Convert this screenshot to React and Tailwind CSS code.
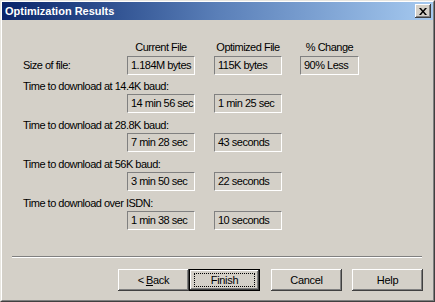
const font = { fontFamily: '"Liberation Sans", Arial, sans-serif' };

const Box = ({ children, className = '' }) => (
  <div
    className={`h-[19px] flex items-center pl-[3px] text-[11px] text-black whitespace-nowrap overflow-hidden border-t border-l border-t-[#808080] border-l-[#808080] border-b border-r border-b-white border-r-white ${className}`}
  >
    {children}
  </div>
);

const Btn = ({ children, isDefault }) => (
  <button
    className={`w-[71px] h-[22px] bg-[#d4d0c8] text-[11px] text-black flex items-center justify-center ${
      isDefault
        ? 'border border-black shadow-[inset_-1px_-1px_#404040,inset_1px_1px_#ffffff,inset_-2px_-2px_#808080]'
        : 'shadow-[inset_-1px_-1px_#404040,inset_1px_1px_#ffffff,inset_-2px_-2px_#808080]'
    }`}
  >
    {isDefault ? (
      <span className="w-[61px] h-[14px] border border-dotted border-black flex items-center justify-center">
        {children}
      </span>
    ) : (
      children
    )}
  </button>
);

const rows = [
  { label: 'Time to download at 14.4K baud:', cur: '14 min 56 sec', opt: '1 min 25 sec' },
  { label: 'Time to download at 28.8K baud:', cur: '7 min 28 sec', opt: '43 seconds' },
  { label: 'Time to download at 56K baud:', cur: '3 min 50 sec', opt: '22 seconds' },
  { label: 'Time to download over ISDN:', cur: '1 min 38 sec', opt: '10 seconds' },
];

export default function App() {
  return (
    <div
      style={font}
      className="w-[435px] h-[302px] bg-[#d4d0c8] border border-t-[#e8e6e0] border-l-[#e8e6e0] border-b-[#404040] border-r-[#404040] overflow-hidden"
    >
      <div className="h-full border border-t-white border-l-white border-b-[#808080] border-r-[#808080] flex flex-col">
        {/* Title bar */}
        <div className="h-[18px] bg-gradient-to-r from-[#0a246a] via-[#5a7fb8] to-[#a6caf0] flex items-center justify-between pl-[3px] pr-[2px]">
          <span className="text-white font-bold text-[11px] leading-none">Optimization Results</span>
          <div className="w-[16px] h-[14px] bg-[#d4d0c8] shadow-[inset_-1px_-1px_#404040,inset_1px_1px_#ffffff,inset_-2px_-2px_#808080] flex items-center justify-center">
            <svg width="8" height="7" viewBox="0 0 8 7">
              <path d="M0 0h2l2 2.5L6 0h2L5 3.5 8 7H6L4 4.5 2 7H0l3-3.5z" fill="#000" />
            </svg>
          </div>
        </div>

        {/* Content */}
        <div className="pl-[21px] pt-[20px] text-[11px] text-black tracking-[-0.5px] whitespace-nowrap">
          <div className="flex h-[14px] leading-[14px] ml-[104px]">
            <span className="w-[68px] text-center">Current File</span>
            <span className="w-[68px] ml-[19px] text-center">Optimized File</span>
            <span className="w-[59px] ml-[18px] text-center">% Change</span>
          </div>
          <div className="flex items-center mt-[2px]">
            <span className="w-[104px]">Size of file:</span>
            <Box className="w-[68px] h-[18px]">1.184M bytes</Box>
            <Box className="w-[68px] h-[18px] ml-[19px]">115K bytes</Box>
            <Box className="w-[59px] h-[18px] ml-[18px]">90% Less</Box>
          </div>
          {rows.map((r, i) => (
            <div key={r.label} className={i === 0 ? 'mt-[4px]' : 'mt-[5px]'}>
              <div className="h-[14px] leading-[14px]">{r.label}</div>
              <div className="flex mt-[1px] ml-[104px]">
                <Box className="w-[68px]">{r.cur}</Box>
                <Box className="w-[68px] ml-[19px]">{r.opt}</Box>
              </div>
            </div>
          ))}
        </div>

        {/* Separator */}
        <div className="mt-[26px] ml-[10px] w-[410px] border-t border-t-[#808080] border-b border-b-white" />

        {/* Buttons */}
        <div className="flex mt-[11px] ml-[116px] tracking-[-0.3px]">
          <Btn>
            &lt; <span className="underline ml-[2px]">B</span>ack
          </Btn>
          <Btn isDefault>Finish</Btn>
          <div className="ml-[11px]">
            <Btn>Cancel</Btn>
          </div>
          <div className="ml-[10px]">
            <Btn>Help</Btn>
          </div>
        </div>
      </div>
    </div>
  );
}
